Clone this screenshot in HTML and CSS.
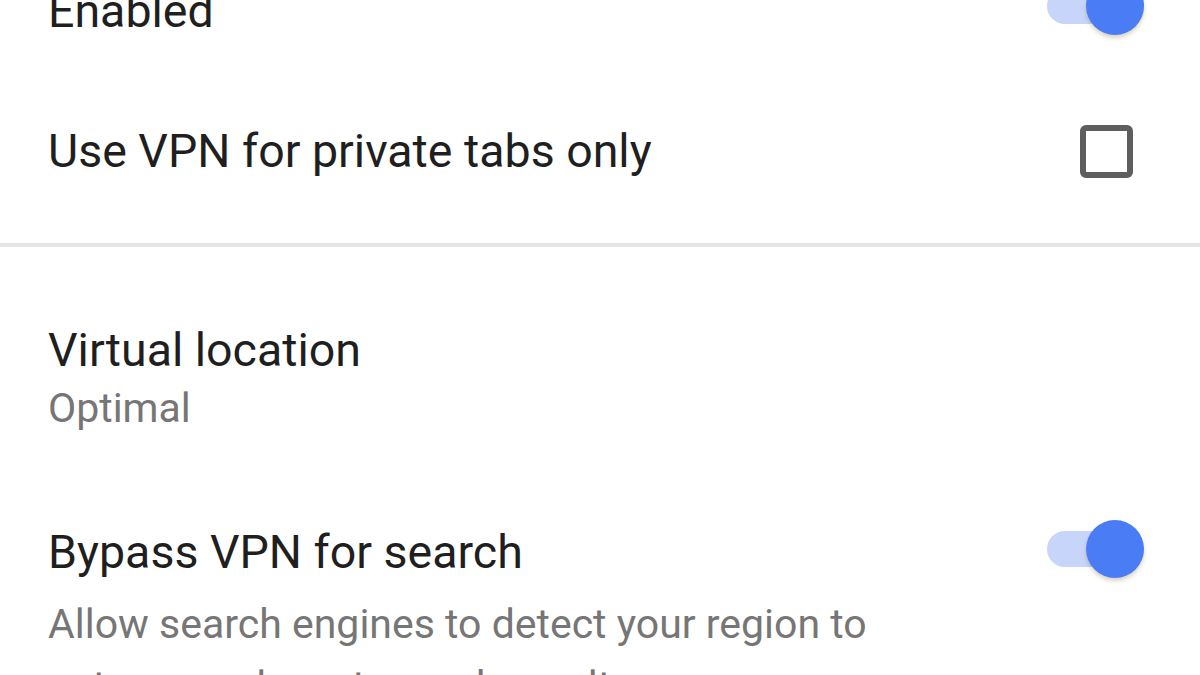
FILE: index.html
```html
<!DOCTYPE html>
<html lang="en">
<head>
<meta charset="utf-8">
<title>VPN settings</title>
<link rel="stylesheet" href="styles.css">
</head>
<body>
<div class="screen">
  <div class="row row-single">
    <div class="title title-first">Enabled</div>
    <div class="toggle toggle-first"><div class="thumb"></div></div>
  </div>
  <div class="row row-single">
    <div class="title">Use VPN for private tabs only</div>
    <div class="checkbox"></div>
  </div>
  <div class="divider"></div>
  <div class="row row-double">
    <div class="text">
      <div class="title">Virtual location</div>
      <div class="summary">Optimal</div>
    </div>
  </div>
  <div class="row row-double">
    <div class="text">
      <div class="title">Bypass VPN for search</div>
      <div class="summary summary-long">Allow search engines to detect your region to get more relevant search results</div>
    </div>
    <div class="toggle toggle-top"><div class="thumb"></div></div>
  </div>
</div>
</body>
</html>
```
FILE: styles.css
```css
html, body {
  margin: 0;
  padding: 0;
  background: #ffffff;
  overflow: hidden;
}
body {
  width: 1200px;
  height: 675px;
  font-family: Roboto, "Noto Sans", sans-serif;
}
.screen {
  margin-top: -62px;
  display: flex;
  flex-direction: column;
}
.row {
  display: flex;
  padding: 0 56px 0 48px;
  gap: 99px;
}
.row-single {
  height: 142px;
  align-items: center;
  justify-content: space-between;
}
.row-double {
  align-items: flex-start;
  justify-content: space-between;
  padding-top: 73px;
  padding-bottom: 11px;
}
.text {
  flex: 1;
  min-width: 0;
}
.title {
  font-size: 46.5px;
  line-height: 60px;
  color: #1f1f1f;
  white-space: nowrap;
}
.title-first {
  margin-top: 4px;
}
.summary {
  font-size: 41px;
  line-height: 60px;
  color: #767676;
  margin-top: -2px;
}
.summary-long {
  margin-top: 11px;
  max-width: 880px;
  line-height: 62px;
}
.toggle {
  width: 97px;
  height: 36px;
  border-radius: 18px;
  background: #c8d5fb;
  display: flex;
  align-items: center;
  justify-content: flex-end;
  flex-shrink: 0;
}
.toggle-first {
  margin-bottom: 6px;
}
.toggle-top {
  margin-top: 9px;
}
.thumb {
  width: 58px;
  height: 58px;
  border-radius: 50%;
  background: #4a7cf5;
  flex-shrink: 0;
  box-shadow: 0 3px 4px rgba(120, 100, 40, 0.28);
}
.checkbox {
  width: 41px;
  height: 41px;
  border: 6px solid #5e5e5e;
  border-radius: 6px;
  margin-right: 11px;
  flex-shrink: 0;
}
.divider {
  height: 4px;
  margin-top: 21px;
  background: #e4e4e4;
}
```
